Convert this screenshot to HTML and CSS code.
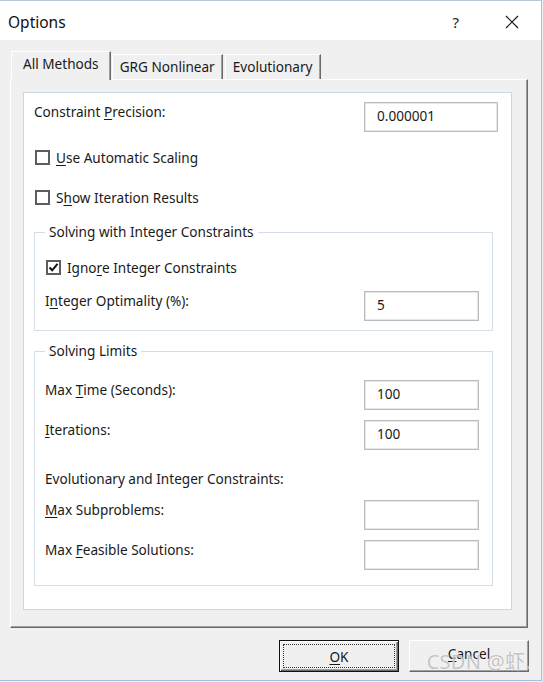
FILE: index.html
```html
<!DOCTYPE html>
<html>
<head>
<meta charset="utf-8">
<link rel="stylesheet" href="styles.css">
</head>
<body>
<div class="window">
  <div class="titlebar">
    <span class="title">Options</span>
    <span class="help">?</span>
    <svg class="close" width="14" height="14" viewBox="0 0 14 14"><path d="M1 1 L13 13 M13 1 L1 13" stroke="#1a1a1a" stroke-width="1.2" fill="none"/></svg>
  </div>
  <div class="body">
    <div class="tabs">
      <div class="tab active">All Methods</div>
      <div class="tab">GRG Nonlinear</div>
      <div class="tab">Evolutionary</div>
    </div>
    <div class="panel">
      <div class="page">
        <div class="row first">
          <span class="label">Constraint <u>P</u>recision:</span>
          <div class="input wide">0.000001</div>
        </div>
        <div class="check c1"><span class="box"></span><span><u>U</u>se Automatic Scaling</span></div>
        <div class="check c2"><span class="box"></span><span>S<u>h</u>ow Iteration Results</span></div>
        <fieldset class="group g1">
          <legend>Solving with Integer Constraints</legend>
          <div class="check c3"><span class="box checked"><svg width="11" height="11" viewBox="0 0 11 11"><path d="M1.5 5.5 L4.2 8.3 L9.5 1.8" stroke="#111" stroke-width="2" fill="none"/></svg></span><span>Igno<u>r</u>e Integer Constraints</span></div>
          <div class="row r-opt">
            <span class="label">I<u>n</u>teger Optimality (%):</span>
            <div class="input">5</div>
          </div>
        </fieldset>
        <fieldset class="group g2">
          <legend>Solving Limits</legend>
          <div class="row r-time">
            <span class="label">Max <u>T</u>ime (Seconds):</span>
            <div class="input">100</div>
          </div>
          <div class="row r-iter">
            <span class="label"><u>I</u>terations:</span>
            <div class="input">100</div>
          </div>
          <div class="sub">Evolutionary and Integer Constraints:</div>
          <div class="row r-subp">
            <span class="label"><u>M</u>ax Subproblems:</span>
            <div class="input"></div>
          </div>
          <div class="row r-feas">
            <span class="label">Max <u>F</u>easible Solutions:</span>
            <div class="input"></div>
          </div>
        </fieldset>
      </div>
    </div>
    <div class="buttons">
      <div class="btn ok"><span class="focus"><u>O</u>K</span></div>
      <div class="btn cancel"><u>C</u>ancel</div>
      <span class="watermark">CSDN @虾.</span>
    </div>
  </div>
</div>
</body>
</html>
```

FILE: styles.css
```css
* { box-sizing: border-box; }
body {
  margin: 0;
  background: #f0f0f0;
  font-family: "Noto Sans", "Noto Sans CJK SC", sans-serif;
  font-size: 13.6px;
  color: #1a1a1a;
}
u { text-decoration-thickness: 1px; text-underline-offset: 2px; }
.window {
  width: 542px;
  height: 681px;
  border-top: 1px solid #b4c8dc;
  border-right: 1px solid #9fc3e6;
  border-bottom: 1px solid #9fc3e6;
  background: #f0f0f0;
  display: flex;
  flex-direction: column;
}
.titlebar {
  height: 39px;
  background: #fff;
  display: flex;
  align-items: center;
  padding: 2px 22px 0 8px;
}
.title { font-size: 15.5px; color: #111; }
.help { margin-left: auto; font-size: 15px; margin-right: 46px; color: #222; }
.close { display: block; }
.body {
  flex: 1;
  padding: 11px 13px 0 10px;
  display: flex;
  flex-direction: column;
}
.tabs {
  display: flex;
  align-items: flex-end;
  height: 29px;
  margin-left: 1px;
  margin-bottom: -1px;
  position: relative;
  z-index: 1;
}
.tab {
  height: 25px;
  margin-bottom: 1px;
  padding: 0 7px;
  line-height: 23px;
  border-top: 1px solid #fff;
  border-left: 1px solid #fff;
  border-right: 1px solid #696969;
  box-shadow: inset -1px 0 #a0a0a0;
  background: #f0f0f0;
  margin-right: 2px;
  white-space: nowrap;
}
.tab.active {
  height: 29px;
  margin-bottom: 0;
  padding: 0 11px;
  line-height: 23px;
  margin-right: 1px;
}
.panel {
  width: 518px;
  height: 549px;
  border-top: 1px solid #fff;
  border-left: 1px solid #fff;
  border-right: 1px solid #696969;
  border-bottom: 1px solid #696969;
  box-shadow: inset -1px -1px #a0a0a0;
  padding: 12px 15px 17px 12px;
  display: flex;
}
.page {
  flex: 1;
  background: #fff;
  border: 1px solid #c9d7e6;
  padding: 9px 13px 0 10px;
  display: flex;
  flex-direction: column;
}
.row {
  display: flex;
  justify-content: space-between;
  align-items: flex-start;
  height: 30px;
}
.label { line-height: 20px; margin-top: 0; }
.input {
  width: 115px;
  height: 30px;
  border: 1px solid #bcbcbc;
  box-shadow: inset 0 0 0 1px #e6e6e6;
  background: #fff;
  padding-left: 12px;
  line-height: 26px;
}
.input.wide { width: 134px; }
.check {
  display: flex;
  align-items: center;
  height: 20px;
  gap: 6px;
}
.c1 { margin-top: 15px; padding-left: 1px; }
.c2 { margin-top: 20px; padding-left: 1px; }
.box {
  width: 15px;
  height: 15px;
  border: 2px solid #5d5d5d;
  background: #fff;
  display: flex;
  align-items: center;
  justify-content: center;
}
.group {
  margin: 15px 5px 0 0;
  border: 1px solid #d3dee9;
  padding: 0 13px 9px 10px;
  min-width: 0;
}
.group legend {
  line-height: 20px;
  padding: 0 4px;
  margin-left: 0px;
}
.g2 { margin-top: 10px; padding-bottom: 15px; }
.c3 { margin-top: 15px; padding-left: 1px; }
.r-opt { margin-top: 14px; }
.r-time { margin-top: 19px; }
.r-iter { margin-top: 10px; }
.sub { margin-top: 19px; line-height: 20px; }
.r-subp { margin-top: 11px; }
.r-feas { margin-top: 10px; }
.buttons {
  display: flex;
  justify-content: flex-end;
  gap: 10px;
  margin-top: 12px;
  margin-right: -1px;
  position: relative;
}
.btn {
  width: 120px;
  height: 32px;
  display: flex;
  align-items: center;
  justify-content: center;
  background: #f0f0f0;
}
.ok {
  border: 1px solid #111;
  box-shadow: inset 1px 1px #fff, inset -1px -1px #696969, inset -2px -2px #a0a0a0;
  padding: 3px;
}
.focus {
  width: 100%;
  height: 100%;
  border: 1px dotted #333;
  display: flex;
  align-items: center;
  justify-content: center;
}
.cancel {
  border-top: 1px solid #fff;
  border-left: 1px solid #fff;
  border-right: 1px solid #696969;
  border-bottom: 1px solid #696969;
  box-shadow: inset -1px -1px #a0a0a0;
  padding-bottom: 6px;
}
.watermark {
  position: absolute;
  right: -2px;
  top: 6px;
  font-size: 20px;
  color: rgba(140, 140, 140, 0.5);
  text-shadow: 0 0 1px #fff;
  letter-spacing: 0.3px;
}
```
